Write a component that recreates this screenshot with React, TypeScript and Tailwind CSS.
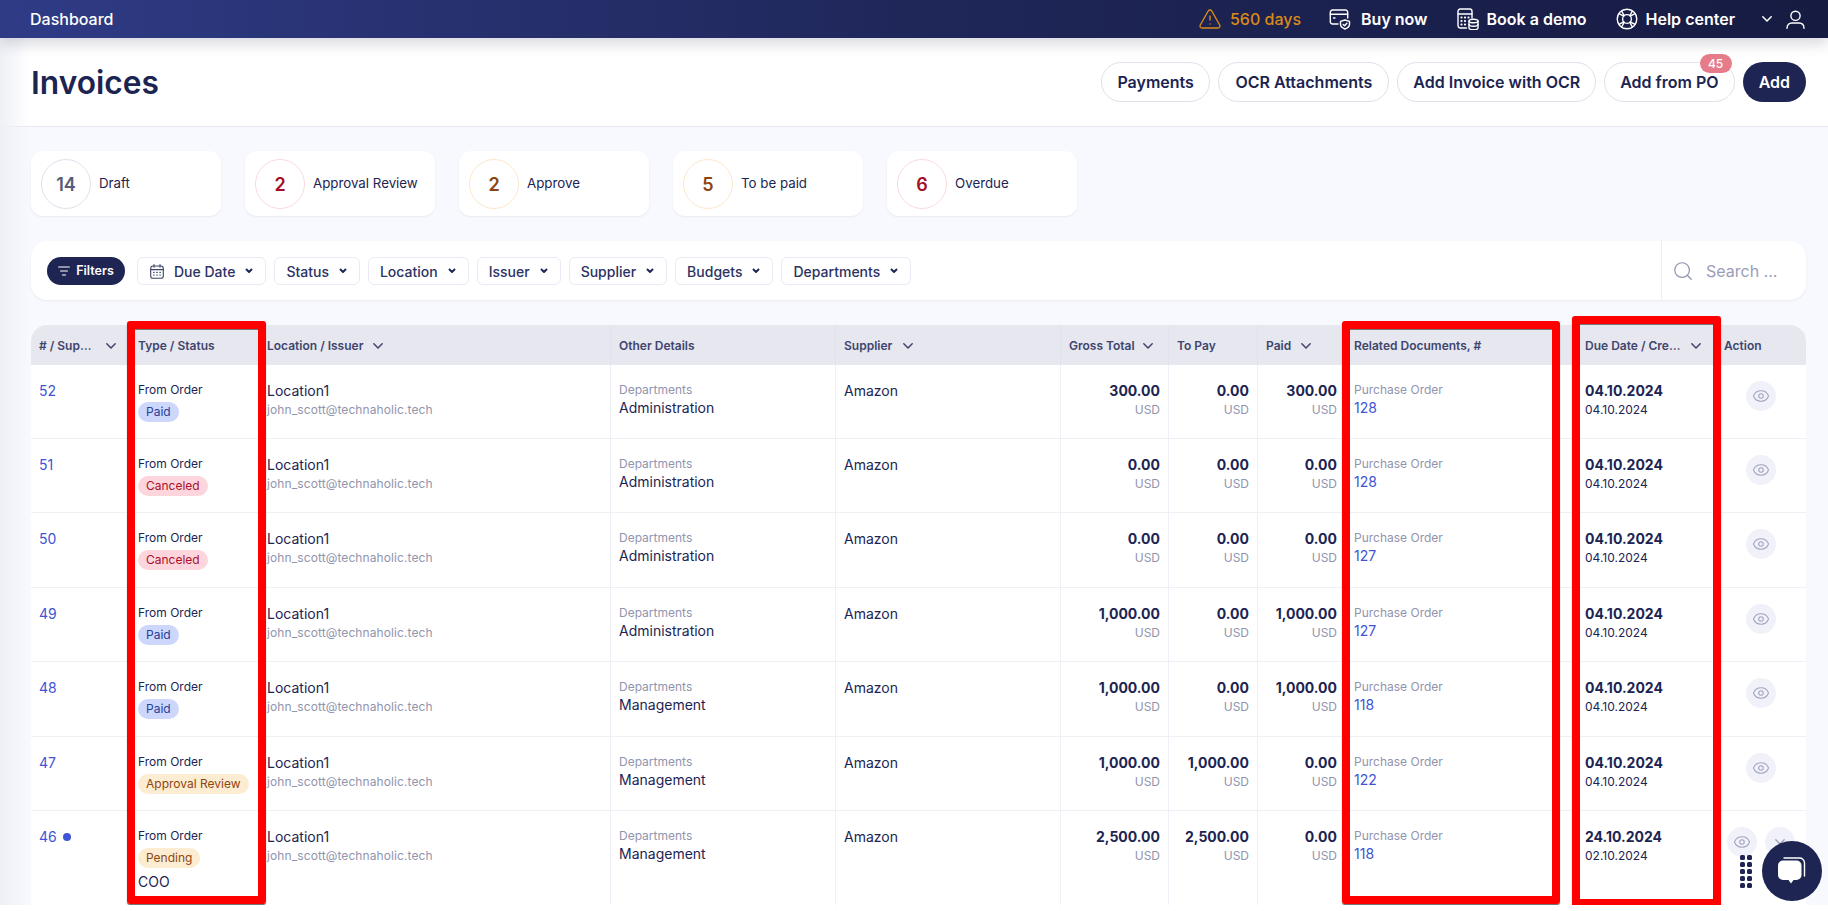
import React from "react";
import { Eye, Search, TriangleAlert } from "lucide-react";

const GRID = "grid grid-cols-[98px_129px_352px_225px_225px_108px_89px_88px_231px_139px_91px]";

function Chevron({ className = "" }: { className?: string }) {
  return (
    <svg width="10" height="6" viewBox="0 0 10 6" fill="none" className={className}>
      <path d="M0.8 0.8 5 5 9.2 0.8" stroke="currentColor" strokeWidth="1.5" strokeLinecap="round" strokeLinejoin="round" />
    </svg>
  );
}

function Caret() {
  return (
    <svg width="8" height="6" viewBox="0 0 8 6" fill="none" className="shrink-0">
      <path d="M1.5 1.500 4 4 6.500 1.500" stroke="#1e2552" strokeWidth="1.9" strokeLinecap="round" strokeLinejoin="round" />
    </svg>
  );
}

function CardIcon() {
  return (
    <svg width="22" height="21" viewBox="0 0 22 21" fill="none" stroke="#fff" strokeWidth="1.4" strokeLinecap="round" strokeLinejoin="round">
      <path d="M9 15H3.500A2.200 2.200 0 0 1 1.300 12.800V3.200A2.200 2.200 0 0 1 3.500 1h13a2.200 2.200 0 0 1 2.200 2.200V9" />
      <path d="M1.300 5.200h17.400" />
      <path d="M4.500 9h1.500" />
      <path d="M16 11l4.500 1.300v3c0 2.400-2 3.800-4.500 4.700-2.500-.9-4.500-2.300-4.500-4.700v-3z" />
      <path d="M14.200 15.400l1.400 1.300 2.300-2.400" />
    </svg>
  );
}

function CalcIcon() {
  return (
    <svg width="22" height="22" viewBox="0 0 22 22" fill="none" stroke="#fff" strokeWidth="1.4" strokeLinecap="round" strokeLinejoin="round">
      <path d="M9.500 20H3.200A2.200 2.200 0 0 1 1 17.800V3.200A2.200 2.200 0 0 1 3.200 1h9.600A2.200 2.200 0 0 1 15 3.200V10" />
      <path d="M1 6h14" />
      <path d="M4.300 9.500h.4M7.800 9.500h.4M11.300 9.500h.4M4.300 13h.4M7.800 13h.4M4.300 16.500h.4M7.800 16.500h.4" strokeWidth="1.8" />
      <ellipse cx="16.500" cy="13" rx="4.500" ry="1.800" />
      <path d="M12 13v7c0 1 2 1.700 4.500 1.700S21 21 21 20v-7" />
      <path d="M12 16.500c0 1 2 1.700 4.500 1.700s4.500-.7 4.500-1.700" />
    </svg>
  );
}

function RingIcon() {
  return (
    <svg width="22" height="22" viewBox="0 0 22 22" fill="none" stroke="#fff" strokeWidth="1.4" strokeLinecap="round" strokeLinejoin="round">
      <circle cx="11" cy="11" r="9.800" />
      <circle cx="11" cy="11" r="4.400" />
      <path d="M3 5.600 7.700 8.200M5.600 3 8.200 7.700M19 5.600 14.300 8.200M16.400 3 13.800 7.700M3 16.400 7.700 13.800M5.600 19 8.200 14.300M19 16.400 14.300 13.800M16.400 19 13.800 14.300" />
    </svg>
  );
}

function UserIcon() {
  return (
    <svg width="19" height="19" viewBox="0 0 19 19" fill="none" stroke="#fff" strokeWidth="1.4" strokeLinecap="round">
      <circle cx="9.500" cy="5.800" r="4.600" />
      <path d="M1 18.300c0-3.600 2.200-5.300 5-5.300h7c2.800 0 5 1.700 5 5.300" />
    </svg>
  );
}

function CalendarIcon() {
  return (
    <svg width="14" height="15" viewBox="0 0 14 15" fill="none" stroke="#3e4468" strokeWidth="1.1" strokeLinecap="round" className="shrink-0">
      <rect x="0.7" y="2" width="12.600" height="12.300" rx="2.400" />
      <path d="M0.7 5.600h12.600M4 0.6v2.600M10 0.6v2.600" />
      <path d="M3.600 8.300h.6M6.700 8.300h.6M9.800 8.300h.6M3.600 11h.6M6.700 11h.6M9.800 11h.6" strokeWidth="1.2" />
    </svg>
  );
}

function FilterIcon() {
  return (
    <svg width="12" height="10" viewBox="0 0 12 10" fill="none" stroke="#fff" strokeWidth="1.2" strokeLinecap="round">
      <path d="M0.7 1h10.600M2.600 5h6.800M4.400 9h3.200" />
    </svg>
  );
}

function ChatIcon() {
  return (
    <svg width="32" height="32" viewBox="0 0 32 32" fill="none">
      <path d="M8 3h15a5 5 0 0 1 5.500 5v13" stroke="#fff" strokeWidth="1.4" strokeLinecap="round" />
      <path d="M7 5.500h13.500a5 5 0 0 1 5 5V20a5 5 0 0 1-5 5H17.500l-2.500 3.500-2.500-3.500H7a5 5 0 0 1-5-5V10.500a5 5 0 0 1 5-5z" fill="#fff" />
    </svg>
  );
}

type BadgeKind = "Paid" | "Canceled" | "Approval Review" | "Pending";
const BADGE: Record<BadgeKind, string> = {
  Paid: "bg-[#cdd7fb] text-[#27409a]",
  Canceled: "bg-[#fdd5dc] text-[#a8102b]",
  "Approval Review": "bg-[#fcecd2] text-[#8f460f]",
  Pending: "bg-[#fcecd2] text-[#8f460f]",
};

type Row = {
  id: string;
  dot?: boolean;
  status: BadgeKind;
  extra?: string;
  dept: string;
  gross: string;
  toPay: string;
  paid: string;
  doc: string;
  due: string;
  created: string;
  two?: boolean;
};

const ROWS: Row[] = [
  { id: "52", status: "Paid", dept: "Administration", gross: "300.00", toPay: "0.00", paid: "300.00", doc: "128", due: "04.10.2024", created: "04.10.2024" },
  { id: "51", status: "Canceled", dept: "Administration", gross: "0.00", toPay: "0.00", paid: "0.00", doc: "128", due: "04.10.2024", created: "04.10.2024" },
  { id: "50", status: "Canceled", dept: "Administration", gross: "0.00", toPay: "0.00", paid: "0.00", doc: "127", due: "04.10.2024", created: "04.10.2024" },
  { id: "49", status: "Paid", dept: "Administration", gross: "1,000.00", toPay: "0.00", paid: "1,000.00", doc: "127", due: "04.10.2024", created: "04.10.2024" },
  { id: "48", status: "Paid", dept: "Management", gross: "1,000.00", toPay: "0.00", paid: "1,000.00", doc: "118", due: "04.10.2024", created: "04.10.2024" },
  { id: "47", status: "Approval Review", dept: "Management", gross: "1,000.00", toPay: "1,000.00", paid: "0.00", doc: "122", due: "04.10.2024", created: "04.10.2024" },
  { id: "46", dot: true, status: "Pending", extra: "COO", dept: "Management", gross: "2,500.00", toPay: "2,500.00", paid: "0.00", doc: "118", due: "24.10.2024", created: "02.10.2024", two: true },
];

const STATS = [
  { n: "14", label: "Draft", num: "text-[#565b78]", ring: "border-[#dfe1ee]" },
  { n: "2", label: "Approval Review", num: "text-[#a30f26]", ring: "border-[#fbd9df]" },
  { n: "2", label: "Approve", num: "text-[#8a4512]", ring: "border-[#fde8c8]" },
  { n: "5", label: "To be paid", num: "text-[#8a4512]", ring: "border-[#fde8c8]" },
  { n: "6", label: "Overdue", num: "text-[#a30f26]", ring: "border-[#fbd9df]" },
];

const HEAD: { t: string; chev?: boolean; gap?: string }[] = [
  { t: "# / Sup…", chev: true, gap: "gap-[15px]" },
  { t: "Type / Status" },
  { t: "Location / Issuer", chev: true, gap: "gap-[10px]" },
  { t: "Other Details" },
  { t: "Supplier", chev: true, gap: "gap-[11px]" },
  { t: "Gross Total", chev: true, gap: "gap-[8px]" },
  { t: "To Pay" },
  { t: "Paid", chev: true, gap: "gap-[10px]" },
  { t: "Related Documents, #" },
  { t: "Due Date / Cre…", chev: true, gap: "gap-[11px]" },
  { t: "Action" },
];

const TOP_BUTTONS = [
  { t: "Payments", px: "px-[15.5px]" },
  { t: "OCR Attachments", px: "px-[16px]" },
  { t: "Add Invoice with OCR", px: "px-[15px]" },
];

function EyeBtn() {
  return (
    <div className="flex h-[30px] w-[30px] items-center justify-center rounded-full bg-[#f1f1fa]">
      <Eye size={18} strokeWidth={1.4} className="text-[#a0a3c0]" />
    </div>
  );
}

function Amount({ v }: { v: string }) {
  return (
    <div className="flex flex-col items-end border-l border-[#eff0f7] pl-[8px] pr-[8px] pt-[16px]">
      <div className="text-[14px] font-bold leading-[20px]">{v}</div>
      <div className="text-[12px] leading-[18px] text-[#9194ad]">USD</div>
    </div>
  );
}

export default function App() {
  return (
    <div className="relative h-[905px] w-full overflow-hidden bg-[#f8f9fe] font-['Inter',sans-serif] text-[#1c2452]">
      <header className="relative z-10 flex h-[38px] items-center justify-between bg-gradient-to-r from-[#2f3b86] via-[#1f2759] to-[#161b42] pl-[30px] pr-[23px] text-white shadow-[0_6px_14px_rgba(60,65,100,0.2)]">
        <div className="text-[16px] font-medium">Dashboard</div>
        <div className="flex items-center">
          <TriangleAlert size={24} strokeWidth={1.4} className="mr-[8px] text-[#d98a19]" />
          <span className="text-[16px] font-medium text-[#d98a19]">560 days</span>
          <span className="ml-[28px] mr-[10px]"><CardIcon /></span>
          <span className="text-[16px] font-semibold">Buy now</span>
          <span className="ml-[29px] mr-[8px]"><CalcIcon /></span>
          <span className="text-[16px] font-semibold">Book a demo</span>
          <span className="ml-[29px] mr-[8px]"><RingIcon /></span>
          <span className="text-[16px] font-semibold">Help center</span>
          <Chevron className="ml-[27px] mr-[14px]" />
          <UserIcon />
        </div>
      </header>

      <section className="flex h-[89px] items-center justify-between border-b border-[#e6e7f0] bg-white pl-[31px] pr-[22px]">
        <h1 className="pt-[1px] text-[31.7px] font-semibold leading-none">Invoices</h1>
        <div className="flex items-center gap-[8px]">
          {TOP_BUTTONS.map((b) => (
            <button key={b.t} className={`h-[40px] rounded-full border border-[#e0e1ea] bg-white ${b.px} text-[16px] font-semibold`}>
              {b.t}
            </button>
          ))}
          <button className="relative h-[40px] rounded-full border border-[#e0e1ea] bg-white px-[15px] text-[16px] font-semibold">
            Add from PO
            <span className="absolute right-[2px] top-[-9px] flex h-[19px] w-[32px] items-center justify-center rounded-full bg-[#e67c89] text-[12px] font-medium text-white">45</span>
          </button>
          <button className="h-[40px] rounded-full bg-[#1e2552] px-[16px] text-[16px] font-semibold text-white">Add</button>
        </div>
      </section>

      <main className="pl-[31px] pr-[22px] pt-[24px]">
        <div className="flex gap-[24px]">
          {STATS.map((s) => (
            <div key={s.label + s.n} className="flex h-[65px] w-[190px] items-center gap-[8px] rounded-[12px] bg-white pl-[10px] shadow-[0_1px_2px_rgba(40,45,90,0.08)]">
              <div className={`flex h-[50px] w-[50px] items-center justify-center rounded-full border pt-[1px] ${s.ring} text-[18px] font-semibold ${s.num}`}>{s.n}</div>
              <div className="pt-[1px] text-[13.3px]">{s.label}</div>
            </div>
          ))}
        </div>

        <div className="mt-[25px] flex h-[59px] justify-between rounded-[16px] bg-white shadow-[0_1px_2px_rgba(40,45,90,0.08)]">
          <div className="flex items-center gap-[8px] pl-[16px] pt-[1px]">
            <div className="mr-[4px] flex h-[28px] w-[78px] items-center justify-center gap-[6px] rounded-full bg-[#1e2552] text-[12.5px] font-semibold text-white">
              <FilterIcon />
              Filters
            </div>
            <div className="flex h-[28px] items-center gap-[10px] rounded-[6px] border border-[#e9eaf3] pl-[12px] pr-[12px] text-[14px] font-medium text-[#2c3263]">
              <CalendarIcon />
              Due Date
              <Caret />
            </div>
            {["Status", "Location", "Issuer", "Supplier", "Budgets", "Departments"].map((f) => (
              <div key={f} className="flex h-[28px] items-center gap-[10px] rounded-[6px] border border-[#e9eaf3] pl-[11px] pr-[12px] text-[14px] font-medium text-[#2c3263]">
                {f}
                <Caret />
              </div>
            ))}
          </div>
          <div className="flex w-[145px] items-center gap-[12px] border-l border-[#eceef5] pl-[10px] pt-[1px]">
            <Search size={22} strokeWidth={1.3} className="text-[#8f92ad]" />
            <span className="text-[16px] text-[#9a9db8]">Search ...</span>
          </div>
        </div>

        <div className="mt-[25px] overflow-hidden rounded-t-[16px] bg-white">
          <div className={`${GRID} h-[39.6px] bg-[#e6e7ef] text-[12px] font-semibold text-[#40456d]`}>
            {HEAD.map((h, i) => (
              <div key={h.t} className={`flex items-center pt-[3px] ${i === 0 ? "pl-[8px]" : i > 2 ? "border-l border-[#e0e2ee] pl-[8px]" : "pl-[9px]"} ${h.gap ?? ""}`}>
                <span>{h.t}</span>
                {h.chev && <Chevron />}
              </div>
            ))}
          </div>
          {ROWS.map((r) => (
            <div key={r.id} className={`${GRID} ${r.two ? "h-[96px]" : "h-[74.4px]"} border-b border-[#eff0f6] text-[14px]`}>
              <div className="flex items-start gap-[6px] pl-[8px] pt-[16px] leading-[20px] text-[#4054d6]">
                {r.id}
                {r.dot && <span className="mt-[6px] h-[8px] w-[8px] rounded-full bg-[#4054d6]" />}
              </div>
              <div className="pl-[9px] pt-[16px]">
                <div className="text-[12px] leading-[18px]">From Order</div>
                <div className={`mt-[3px] inline-block h-[20px] rounded-full px-[8px] text-[12px] leading-[20px] ${BADGE[r.status]}`}>{r.status}</div>
                {r.extra && <div className="mt-[4px] leading-[20px]">{r.extra}</div>}
              </div>
              <div className="pl-[9px] pt-[16px]">
                <div className="leading-[20px]">Location1</div>
                <div className="text-[12px] leading-[18px] tracking-[0.1px] text-[#9194ad]">john_scott@technaholic.tech</div>
              </div>
              <div className="border-l border-[#eff0f7] pl-[8px] pt-[16px]">
                <div className="text-[12px] leading-[18px] text-[#9194ad]">Departments</div>
                <div className="leading-[18px]">{r.dept}</div>
              </div>
              <div className="border-l border-[#eff0f7] pl-[8px] pt-[16px] leading-[20px]">Amazon</div>
              <Amount v={r.gross} />
              <Amount v={r.toPay} />
              <Amount v={r.paid} />
              <div className="border-l border-[#eff0f7] pl-[8px] pt-[16px]">
                <div className="text-[12px] leading-[18px] text-[#9194ad]">Purchase Order</div>
                <div className="leading-[18px] text-[#4054d6]">{r.doc}</div>
              </div>
              <div className="pl-[9px] pt-[16px]">
                <div className="font-bold leading-[20px]">{r.due}</div>
                <div className="text-[12px] leading-[18px]">{r.created}</div>
              </div>
              <div className="flex items-start justify-center gap-[8px] pt-[16px]">
                <EyeBtn />
                {r.two && (
                  <div className="flex h-[30px] w-[30px] items-center justify-center rounded-full bg-[#f1f1fa] text-[#a0a3c0]">
                    <Chevron />
                  </div>
                )}
              </div>
            </div>
          ))}
        </div>
      </main>

      <div className="pointer-events-none absolute bottom-0 left-0 top-[38px] z-0 w-[30px] bg-gradient-to-r from-[#eef0f6] to-transparent" />

      <div className="pointer-events-none absolute left-[127px] top-[321px] h-[583px] w-[139px] rounded-[3px] border-[8px] border-[#ff0000] shadow-[inset_0_1px_0_#777,0_1px_1px_#666]" />
      <div className="pointer-events-none absolute left-[1342px] top-[321px] h-[583px] w-[218px] rounded-[3px] border-[8px] border-[#ff0000] shadow-[inset_0_1px_0_#777,0_1px_1px_#666]" />
      <div className="pointer-events-none absolute left-[1572px] top-[316px] h-[591px] w-[149px] rounded-[3px] border-[8px] border-[#ff0000] shadow-[inset_0_1px_0_#777,0_1px_1px_#666]" />

      <div className="absolute left-[1740px] top-[855px] grid grid-cols-2 gap-x-[1.5px] gap-y-[2px]">
        {Array.from({ length: 10 }).map((_, i) => (
          <span key={i} className="h-[5px] w-[5px] rounded-[1.5px] bg-[#1e2552]" />
        ))}
      </div>
      <div className="absolute left-[1762px] top-[841px] flex h-[60px] w-[60px] items-center justify-center rounded-full bg-[#1e2552]">
        <ChatIcon />
      </div>
    </div>
  );
}
